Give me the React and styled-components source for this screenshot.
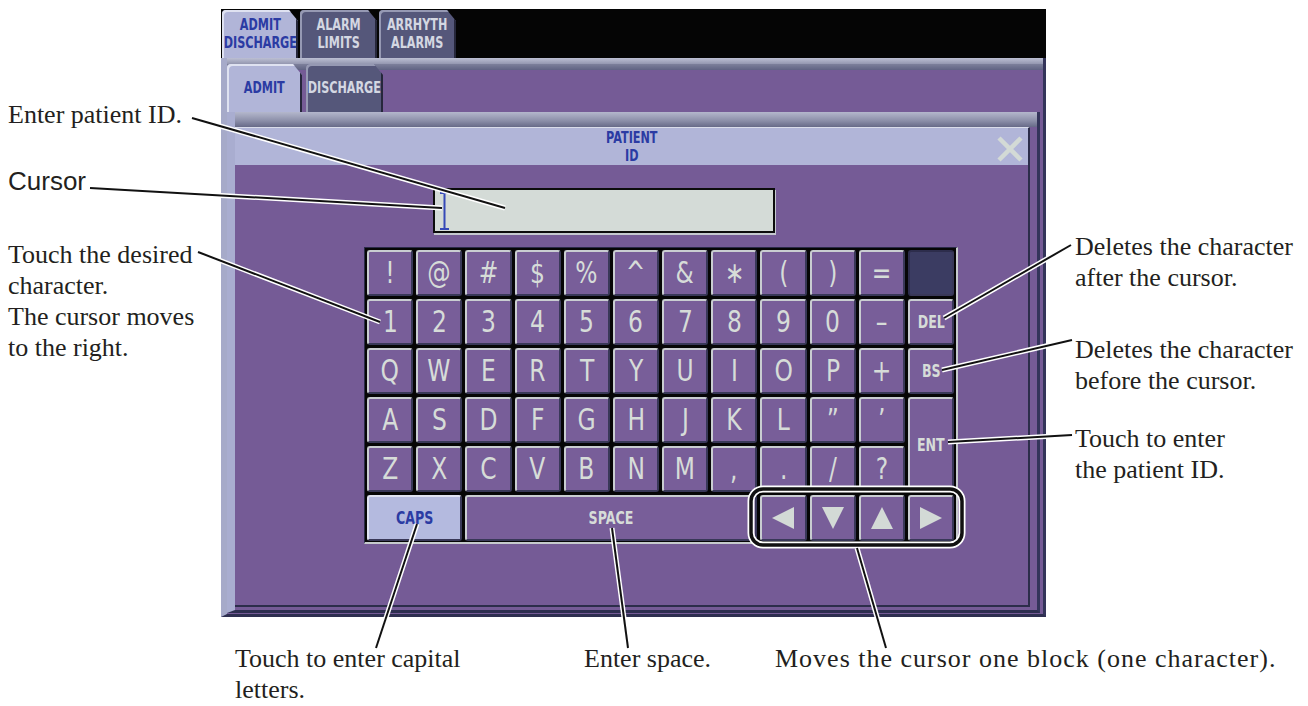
import React from "react";
import styled, { createGlobalStyle } from "styled-components";

const PURPLE = "#755b96";
const LAVENDER = "#b1b5d8";
const SLATE = "#55577a";
const KEY_TEXT = "#d6dcd8";
const BLUE = "#2b3ba3";

const GlobalStyle = createGlobalStyle`
  *, *::before, *::after { box-sizing: border-box; }
  html, body { margin: 0; padding: 0; background: #fff; }
  body { font-family: "Liberation Serif", "Times New Roman", serif; }
`;

// leader lines: x1, y1, x2, y2
const leaders = [
  [192, 118, 505, 208],
  [90, 188, 442, 208],
  [198, 252, 380, 322],
  [944, 318, 1071, 245],
  [942, 370, 1072, 340],
  [948, 442, 1072, 435],
  [417, 524, 376, 648],
  [612, 528, 628, 648],
  [857, 548, 886, 648],
];

const topTabs = [
  { lines: ["ADMIT", "DISCHARGE"], w: 76, active: true },
  { lines: ["ALARM", "LIMITS"], w: 77 },
  { lines: ["ARRHYTH", "ALARMS"], w: 77 },
];

const subTabs = [
  { lines: ["ADMIT"], w: 75, active: true },
  { lines: ["DISCHARGE"], w: 77 },
];

const keyRows = [
  ["!", "@", "#", "$", "%", "^", "&", "\u2217", "(", ")", "="],
  ["1", "2", "3", "4", "5", "6", "7", "8", "9", "0", "\u2013"],
  ["Q", "W", "E", "R", "T", "Y", "U", "I", "O", "P", "+"],
  ["A", "S", "D", "F", "G", "H", "J", "K", "L", "\u201d", "\u2019"],
  ["Z", "X", "C", "V", "B", "N", "M", ",", ".", "/", "?"],
];

// right column of the keyboard, one per row (ENT spans two rows)
const sideKeys = [
  { kind: "blank" },
  { label: "DEL" },
  { label: "BS" },
  { label: "ENT", rows: 2 },
  null,
];

const Triangle = ({ dir }) => {
  const pts = {
    left: "1,12 23,1 23,23",
    right: "23,12 1,1 1,23",
    down: "1,1 23,1 12,23",
    up: "1,23 23,23 12,1",
  }[dir];
  return (
    <svg width="24" height="24" viewBox="0 0 24 24">
      <polygon points={pts} fill="#d3dad6" />
    </svg>
  );
};

const CloseIcon = () => (
  <svg width="28" height="28" viewBox="0 0 28 28">
    <path d="M3 3 L25 25 M25 3 L3 25" stroke="#d3dad6" strokeWidth="4.5" />
  </svg>
);

const CursorBeam = () => (
  <svg width="9" height="38" viewBox="0 0 9 38">
    <path d="M4.5 1 V37 M0 1 H9 M0 37 H9" stroke="#3549b8" strokeWidth="2" fill="none" />
  </svg>
);

const Squeeze = ({ children, size = 16, color }) => (
  <SqueezeText $size={size} $color={color}>
    {children}
  </SqueezeText>
);

const App = () => {
  return (
    <Page>
      <GlobalStyle />
      <TopRow>
        <LeftNotes>
          <Note $mt={99}>Enter patient ID.</Note>
          <Note $mt={36} $sans>
            Cursor
          </Note>
          <Note $mt={42}>
            Touch the desired
            <br />
            character.
            <br />
            The cursor moves
            <br />
            to the right.
          </Note>
        </LeftNotes>

        <Screen>
          <TabBar>
            {topTabs.map((t) => (
              <Tab key={t.lines.join()} $w={t.w} $active={t.active}>
                <Squeeze color={t.active ? BLUE : "#d4d7e2"}>
                  {t.lines.map((l) => (
                    <div key={l}>{l}</div>
                  ))}
                </Squeeze>
              </Tab>
            ))}
          </TabBar>

          <MainPanel>
            <MainBand />
            <SubTabRow>
              {subTabs.map((t) => (
                <Tab key={t.lines.join()} $w={t.w} $active={t.active}>
                  <Squeeze color={t.active ? BLUE : "#d4d7e2"}>
                    {t.lines[0]}
                  </Squeeze>
                </Tab>
              ))}
            </SubTabRow>

            <SubPanel>
              <SubBand />
              <Dialog>
                <TitleBar>
                  <span />
                  <Squeeze color={BLUE}>
                    <div>PATIENT</div>
                    <div>ID</div>
                  </Squeeze>
                  <CloseButton>
                    <CloseIcon />
                  </CloseButton>
                </TitleBar>

                <DialogBody>
                  <InputField>
                    <CursorBeam />
                  </InputField>

                  <Keyboard>
                    {keyRows.map((row, r) => (
                      <React.Fragment key={r}>
                        {row.map((ch) => (
                          <Key key={ch}>
                            <Glyph>{ch}</Glyph>
                          </Key>
                        ))}
                        {sideKeys[r] &&
                          (sideKeys[r].kind === "blank" ? (
                            <Key $variant="blank" />
                          ) : (
                            <Key $rs={sideKeys[r].rows}>
                              <Squeeze size={18}>{sideKeys[r].label}</Squeeze>
                            </Key>
                          ))}
                      </React.Fragment>
                    ))}
                    <Key $cs={2} $variant="caps">
                      <Squeeze size={18} color={BLUE}>
                        CAPS
                      </Squeeze>
                    </Key>
                    <Key $cs={6}>
                      <Squeeze size={18}>SPACE</Squeeze>
                    </Key>
                    {["left", "down", "up", "right"].map((d) => (
                      <Key key={d}>
                        <Triangle dir={d} />
                      </Key>
                    ))}
                  </Keyboard>
                </DialogBody>
              </Dialog>
            </SubPanel>
          </MainPanel>
        </Screen>

        <RightNotes>
          <Note $mt={231}>
            Deletes the character
            <br />
            after the cursor.
          </Note>
          <Note $mt={41}>
            Deletes the character
            <br />
            before the cursor.
          </Note>
          <Note $mt={27}>
            Touch to enter
            <br />
            the patient ID.
          </Note>
        </RightNotes>
      </TopRow>

      <BottomRow>
        <Note>
          Touch to enter capital
          <br />
          letters.
        </Note>
        <Note>Enter space.</Note>
        <Note $ls={1}>Moves the cursor one block (one character).</Note>
      </BottomRow>

      <Overlay viewBox="0 0 1308 706" width="1308" height="706">
        <rect x="751" y="489" width="211" height="56" rx="12" fill="none" stroke="#fff" strokeWidth="7" />
        {leaders.map(([x1, y1, x2, y2], i) => (
          <line key={`h${i}`} x1={x1} y1={y1} x2={x2} y2={y2} stroke="#fff" strokeWidth="5" />
        ))}
        <rect x="751" y="489" width="211" height="56" rx="12" fill="none" stroke="#111" strokeWidth="3.5" />
        {leaders.map(([x1, y1, x2, y2], i) => (
          <line key={`l${i}`} x1={x1} y1={y1} x2={x2} y2={y2} stroke="#111" strokeWidth="2" />
        ))}
      </Overlay>
    </Page>
  );
};

export default App;

// Styled Components
const Page = styled.div`
  position: relative;
  width: 1308px;
  height: 706px;
  overflow: hidden;
  background: #fff;
  color: #231f20;
`;

const TopRow = styled.div`
  display: flex;
  height: 617px;
`;

const LeftNotes = styled.div`
  width: 221px;
  flex: none;
  padding-left: 8px;
  display: flex;
  flex-direction: column;
`;

const RightNotes = styled.div`
  flex: 1;
  padding-left: 29px;
  display: flex;
  flex-direction: column;
`;

const Note = styled.div`
  font-family: ${(p) =>
    p.$sans
      ? '"Liberation Sans", Arial, sans-serif'
      : '"Liberation Serif", "Times New Roman", serif'};
  font-size: 26px;
  line-height: 31px;
  letter-spacing: ${(p) => p.$ls || 0}px;
  margin-top: ${(p) => p.$mt || 0}px;
  white-space: nowrap;
`;

const BottomRow = styled.div`
  display: grid;
  grid-template-columns: 349px 191px auto;
  padding: 26px 0 0 235px;
`;

const Screen = styled.div`
  width: 825px;
  height: 608px;
  margin-top: 9px;
  flex: none;
  background: #050505;
  display: flex;
  flex-direction: column;
`;

const TabBar = styled.div`
  height: 49px;
  flex: none;
  display: flex;
  align-items: flex-end;
  gap: 2px;
  padding-left: 1px;
`;

const Tab = styled.div`
  width: ${(p) => p.$w}px;
  height: 48px;
  flex: none;
  display: flex;
  align-items: center;
  justify-content: center;
  text-align: center;
  background: ${(p) => (p.$active ? LAVENDER : SLATE)};
  border-radius: 4px 0 0 0;
  clip-path: polygon(0 0, calc(100% - 9px) 0, 100% 11px, 100% 100%, 0 100%);
  box-shadow: inset 2px 2px 0 ${(p) => (p.$active ? "#dfe2f1" : "#9699b3")},
    inset -2px 0 0 #26273b;
`;

const SqueezeText = styled.div`
  flex: none;
  display: inline-block;
  font-family: "DejaVu Sans", "Liberation Sans", sans-serif;
  font-weight: bold;
  font-size: ${(p) => p.$size}px;
  line-height: ${(p) => p.$size + 2}px;
  color: ${(p) => p.$color || KEY_TEXT};
  text-align: center;
  white-space: nowrap;
  transform: scaleX(0.7);
`;

const MainPanel = styled.div`
  flex: 1;
  display: flex;
  flex-direction: column;
  background: ${PURPLE};
  border-left: 6px solid #a6aac9;
  border-right: 3px solid #34355a;
  border-bottom: 3px solid #2e2f50;
  padding: 0 3px 1px 0;
`;

const MainBand = styled.div`
  height: 6px;
  flex: none;
  margin-right: -3px;
  background: linear-gradient(#bcbfd3, #9497b0);
`;

const SubTabRow = styled.div`
  height: 48px;
  flex: none;
  display: flex;
  gap: 4px;
  margin-right: -3px;
  background: linear-gradient(#7d809b 0, #606383 6px, ${PURPLE} 6px);
`;

const SubPanel = styled.div`
  flex: 1;
  display: flex;
  flex-direction: column;
  border-left: 8px solid #a9add0;
  border-right: 3px solid #33345a;
  border-bottom: 3px solid #2d2e4f;
  padding: 0 7px 3px 0;
`;

const SubBand = styled.div`
  height: 15px;
  flex: none;
  margin-right: -7px;
  background: linear-gradient(#b4b7cc, #8e91ab 55%, #676a88);
`;

const Dialog = styled.div`
  flex: 1;
  display: flex;
  flex-direction: column;
  background: ${PURPLE};
  border-top: 1px solid #d9dcea;
  border-right: 2px solid #2c2d4a;
  border-bottom: 2px solid #2c2d4a;
`;

const TitleBar = styled.div`
  height: 37px;
  flex: none;
  display: grid;
  grid-template-columns: 1fr auto 1fr;
  align-items: center;
  background: ${LAVENDER};
  line-height: 17px;
`;

const CloseButton = styled.div`
  justify-self: end;
  display: flex;
  margin-right: 4px;
  margin-top: 4px;
`;

const DialogBody = styled.div`
  flex: 1;
  display: flex;
  flex-direction: column;
  padding-top: 23px;
`;

const InputField = styled.div`
  width: 342px;
  height: 45px;
  margin-left: 198px;
  display: flex;
  align-items: center;
  padding-left: 5px;
  background: #d4dbd7;
  border: 2px solid #0c0c0c;
  box-shadow: 1px 2px 0 #c5c9cf;
`;

const Keyboard = styled.div`
  width: 594px;
  height: 297px;
  margin: 14px 0 0 129px;
  display: grid;
  grid-template-columns: repeat(12, 1fr);
  grid-template-rows: repeat(6, 1fr);
  gap: 3px;
  padding: 2px 2px 1px 2px;
  background: #060606;
  border-top: 1px solid #2a2a48;
  border-left: 1px solid #2a2a48;
  border-right: 2px solid #c6cacd;
  border-bottom: 2px solid #c6cacd;
`;

const keyFill = { caps: "#b4badf", blank: "#3b3c62" };
const keyLight = { caps: "#e0e3f2", blank: "#2d2d4c" };

const Key = styled.div`
  grid-column: span ${(p) => p.$cs || 1};
  grid-row: span ${(p) => p.$rs || 1};
  display: flex;
  align-items: center;
  justify-content: center;
  overflow: hidden;
  border-radius: 3px;
  background: ${(p) => keyFill[p.$variant] || "#785e99"};
  border-top: 2px solid ${(p) => keyLight[p.$variant] || "#c9cdd1"};
  border-left: 2px solid ${(p) => keyLight[p.$variant] || "#c9cdd1"};
  border-right: 2px solid #393858;
  border-bottom: 2px solid #393858;
  color: ${KEY_TEXT};
`;

const Glyph = styled.span`
  display: inline-block;
  font-family: "DejaVu Sans", "Liberation Sans", sans-serif;
  font-size: 30px;
  line-height: 1;
  transform: scaleX(0.78);
`;

const Overlay = styled.svg`
  position: absolute;
  left: 0;
  top: 0;
  pointer-events: none;
`;
